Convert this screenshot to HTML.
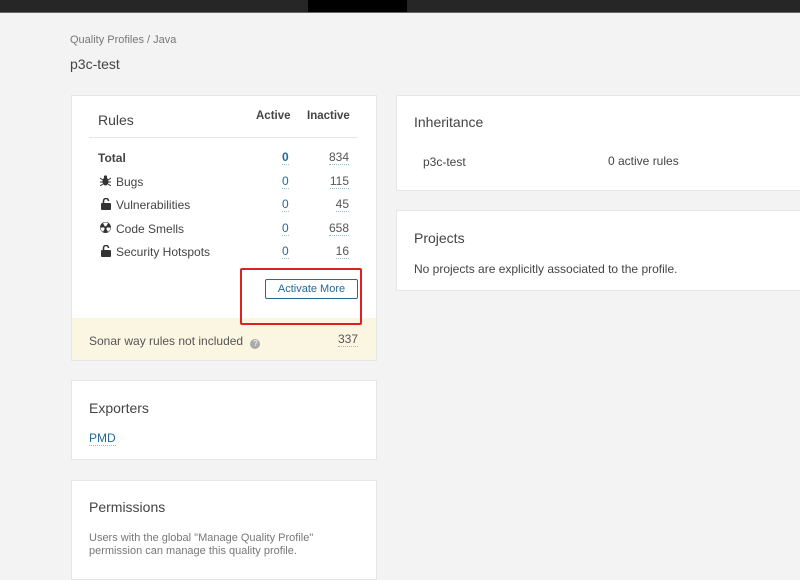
<!DOCTYPE html>
<html><head><meta charset="utf-8"><style>
*{margin:0;padding:0;box-sizing:border-box}
body{width:800px;height:566px;overflow:hidden;background:#f3f3f3;font-family:"Liberation Sans",sans-serif;color:#444;font-size:12px;position:relative}
.a{position:absolute;white-space:nowrap}
.card{position:absolute;background:#fff;border:1px solid #e6e6e6}
.t{font-size:14px;color:#444}
.n{color:#236a97;border-bottom:1px dotted #9bb;line-height:13px}
.g{color:#666}
svg.i{position:absolute;fill:#333}
</style></head><body>
<div class="a" style="left:0;top:0;width:800px;height:13px;background:#262626;border-bottom:1px solid #666"></div>
<div class="a" style="left:308px;top:0;width:99px;height:12px;background:#000"></div>
<div class="a g" style="left:70px;top:34px;font-size:11px;color:#777">Quality Profiles / Java</div>
<div class="a" style="left:70px;top:56px;font-size:14px;color:#444">p3c-test</div>

<div class="card" style="left:71px;top:95px;width:306px;height:266px"></div>
<div class="a t" style="left:98px;top:112px">Rules</div>
<div class="a" style="left:256px;top:110px;font-weight:bold;font-size:11.5px">Active</div>
<div class="a" style="left:307px;top:110px;font-weight:bold;font-size:11.5px">Inactive</div>
<div class="a" style="left:89px;top:137px;width:269px;height:1px;background:#e6e6e6"></div>
<div class="a" style="left:98px;top:151px;font-weight:bold">Total</div>
<svg class="i" style="left:100px;top:175px" width="11" height="11" viewBox="0 0 11 11"><ellipse cx="5.5" cy="6.5" rx="3" ry="4"/><circle cx="5.5" cy="2" r="1.6"/><path d="M0 3l3 2M11 3l-3 2M0 7h3M11 7h-3M0 11l3-2M11 11l-3-2" stroke="#333" stroke-width="1"/></svg>
<div class="a" style="left:116px;top:175px">Bugs</div>
<svg class="i" style="left:101px;top:198px" width="10" height="12" viewBox="0 0 10 12"><rect x="0" y="5" width="10" height="7" rx="1"/><path d="M2.5 5V3a2.5 2.5 0 0 1 5 0" fill="none" stroke="#333" stroke-width="1.6"/></svg>
<div class="a" style="left:116px;top:198px">Vulnerabilities</div>
<svg class="i" style="left:100px;top:222px" width="11" height="11" viewBox="0 0 11 11"><circle cx="5.5" cy="5.5" r="5.5"/><path d="M5.5 5.5L3 1.2A5 5 0 0 1 8 1.2ZM5.5 5.5L10.5 5.5A5 5 0 0 1 8 9.8ZM5.5 5.5L3 9.8A5 5 0 0 1 .5 5.5Z" fill="#fff"/><circle cx="5.5" cy="5.5" r="1.3"/></svg>
<div class="a" style="left:116px;top:222px">Code Smells</div>
<svg class="i" style="left:101px;top:245px" width="10" height="12" viewBox="0 0 10 12"><rect x="0" y="5" width="10" height="7" rx="1"/><path d="M2.5 5V3a2.5 2.5 0 0 1 5 0" fill="none" stroke="#333" stroke-width="1.6"/></svg>
<div class="a" style="left:116px;top:245px">Security Hotspots</div>
<div class="a n" style="left:282px;top:151px;font-weight:bold">0</div>
<div class="a n" style="left:282px;top:175px">0</div>
<div class="a n" style="left:282px;top:198px">0</div>
<div class="a n" style="left:282px;top:222px">0</div>
<div class="a n" style="left:282px;top:245px">0</div>
<div class="a n" style="right:451px;top:151px;color:#555">834</div>
<div class="a n" style="right:451px;top:175px;color:#555">115</div>
<div class="a n" style="right:451px;top:198px;color:#555">45</div>
<div class="a n" style="right:451px;top:222px;color:#555">658</div>
<div class="a n" style="right:451px;top:245px;color:#555">16</div>
<div class="a" style="left:265px;top:279px;width:93px;height:20px;border:1px solid #236a97;border-radius:2px;color:#236a97;font-size:11px;text-align:center;line-height:18px">Activate More</div>
<div class="a" style="left:72px;top:318px;width:304px;height:42px;background:#fbf6e2"></div>
<div class="a" style="left:89px;top:334px;color:#555">Sonar way rules not included <span style="display:inline-block;width:10px;height:10px;border-radius:50%;background:#aaa;margin-left:4px;color:#fff;font-size:8px;line-height:10px;text-align:center;vertical-align:-1px">?</span></div>
<div class="a n" style="right:442px;top:333px;color:#555">337</div>
<div class="a" style="left:240px;top:268px;width:122px;height:57px;border:2px solid #e02020;border-radius:2px"></div>

<div class="card" style="left:71px;top:380px;width:306px;height:80px"></div>
<div class="a t" style="left:89px;top:400px">Exporters</div>
<div class="a n" style="left:89px;top:432px">PMD</div>

<div class="card" style="left:71px;top:480px;width:306px;height:100px"></div>
<div class="a t" style="left:89px;top:499px">Permissions</div>
<div class="a g" style="left:89px;top:532px;font-size:11px;line-height:13px;color:#777">Users with the global "Manage Quality Profile"<br>permission can manage this quality profile.</div>

<div class="card" style="left:396px;top:95px;width:410px;height:96px"></div>
<div class="a t" style="left:414px;top:114px">Inheritance</div>
<div class="a" style="left:423px;top:155px">p3c-test</div>
<div class="a" style="left:608px;top:154px">0 active rules</div>

<div class="card" style="left:396px;top:210px;width:410px;height:81px"></div>
<div class="a t" style="left:414px;top:230px">Projects</div>
<div class="a" style="left:414px;top:262px">No projects are explicitly associated to the profile.</div>
</body></html>
